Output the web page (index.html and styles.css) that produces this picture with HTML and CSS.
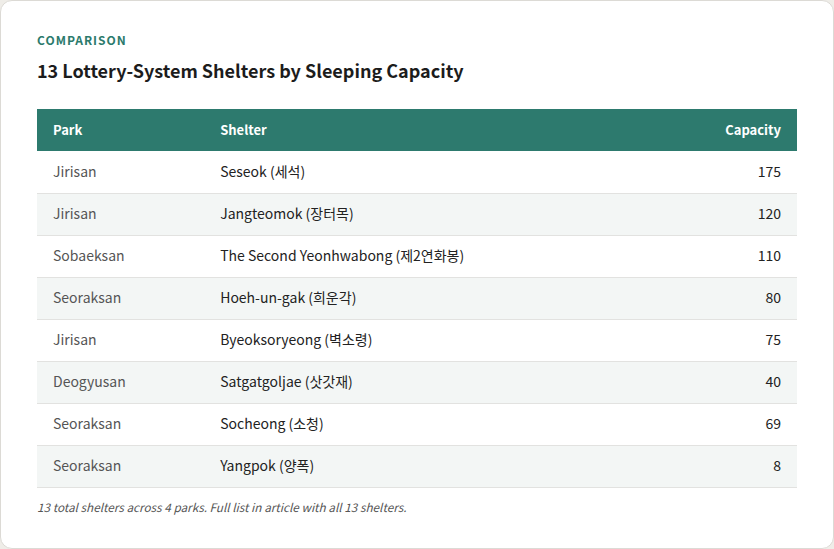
FILE: index.html
```html
<!DOCTYPE html>
<html lang="en">
<head>
<meta charset="utf-8">
<link rel="stylesheet" href="styles.css">
</head>
<body>
<div class="card">
  <div class="eyebrow">COMPARISON</div>
  <h1 class="title">13 Lottery-System Shelters by Sleeping Capacity</h1>
  <table class="tbl">
    <thead>
      <tr><th class="c-park">Park</th><th>Shelter</th><th class="num">Capacity</th></tr>
    </thead>
    <tbody>
      <tr><td class="park">Jirisan</td><td>Seseok (세석)</td><td class="num">175</td></tr>
      <tr><td class="park">Jirisan</td><td>Jangteomok (장터목)</td><td class="num">120</td></tr>
      <tr><td class="park">Sobaeksan</td><td>The Second Yeonhwabong (제2연화봉)</td><td class="num">110</td></tr>
      <tr><td class="park">Seoraksan</td><td>Hoeh-un-gak (희운각)</td><td class="num">80</td></tr>
      <tr><td class="park">Jirisan</td><td>Byeoksoryeong (벽소령)</td><td class="num">75</td></tr>
      <tr><td class="park">Deogyusan</td><td>Satgatgoljae (삿갓재)</td><td class="num">40</td></tr>
      <tr><td class="park">Seoraksan</td><td>Socheong (소청)</td><td class="num">69</td></tr>
      <tr><td class="park">Seoraksan</td><td>Yangpok (양폭)</td><td class="num">8</td></tr>
    </tbody>
  </table>
  <p class="note">13 total shelters across 4 parks. Full list in article with all 13 shelters.</p>
</div>
</body>
</html>
```
FILE: styles.css
```css
html, body {
  margin: 0;
  padding: 0;
  background: #efede8;
}
body {
  font-family: "Noto Sans CJK KR", "Noto Sans", sans-serif;
  color: #1f1f1f;
}
.card {
  box-sizing: border-box;
  width: 834px;
  height: 549px;
  background: #fff;
  border: 1px solid #dcdad5;
  border-radius: 12px;
  padding: 30px 36px 0;
}
.eyebrow {
  font-size: 12px;
  font-weight: 700;
  letter-spacing: 1px;
  color: #2b7a6c;
  line-height: 18px;
}
.title {
  margin: 8px 0 0;
  font-size: 18px;
  font-weight: 700;
  line-height: 26px;
  color: #1c1c1c;
}
.tbl {
  margin-top: 26px;
  width: 100%;
  border-collapse: collapse;
  font-size: 14px;
}
.tbl th {
  background: #2d7a6e;
  color: #fff;
  font-size: 13px;
  font-weight: 700;
  text-align: left;
  height: 42px;
  padding: 0 16px 1px;
  box-sizing: border-box;
}
.tbl th.c-park { width: 22%; }
.tbl td {
  height: 42px;
  padding: 0 16px 2px;
  border-bottom: 1px solid #e2e2e0;
  color: #222;
  box-sizing: border-box;
}
.tbl td.park { color: #555; }
.tbl tbody tr:nth-child(even) td { background: #f3f6f5; }
.tbl .num { text-align: right; }
.note {
  margin: 10px 0 0;
  font-size: 11.75px;
  font-style: italic;
  color: #555;
}
```
